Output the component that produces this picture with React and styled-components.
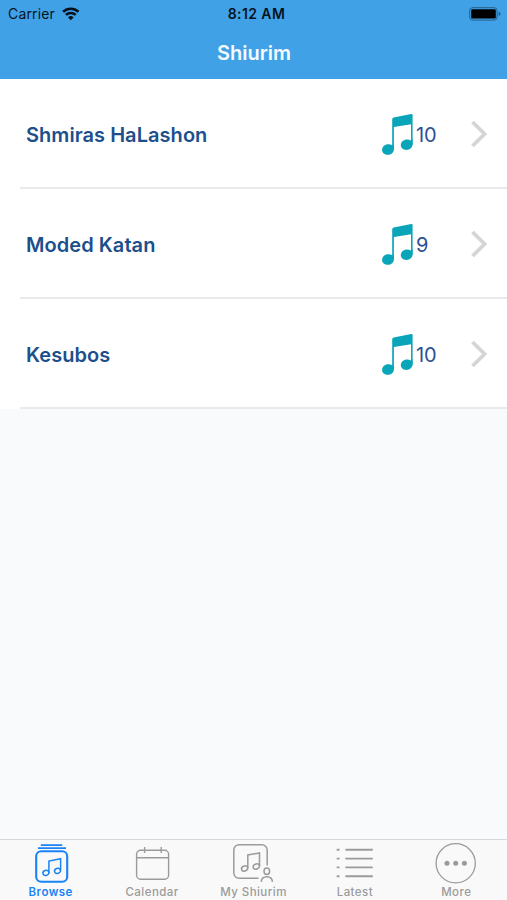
import React, { useState } from 'react'
import styled, { createGlobalStyle } from 'styled-components'

const GlobalStyle = createGlobalStyle`
  body {
    margin: 0;
    background: #f9fafc;
    font-family: Inter, 'Liberation Sans', sans-serif;
  }
`
const Screen = styled.div`
  display: flex;
  flex-direction: column;
  height: 900px;
  overflow: hidden;
  width: 507px;
`
const Header = styled.header`
  background: #40a1e7;
  flex: none;
  height: 79px;
`
const StatusBar = styled.div`
  align-items: center;
  box-sizing: border-box;
  color: #06131e;
  display: grid;
  grid-template-columns: 1fr auto 1fr;
  height: 27px;
  padding: 0 6px 0 8px;
`
const Carrier = styled.div`
  align-items: center;
  display: flex;
  font-size: 14px;
  gap: 7px;
  letter-spacing: 0.15px;
`
const Clock = styled.div`
  font-size: 14px;
  font-weight: 600;
  letter-spacing: 0.4px;
  padding-left: 4px;
`
const Battery = styled.svg`
  justify-self: end;
`
const Title = styled.h1`
  color: #f4faff;
  font-size: 20px;
  font-weight: 600;
  letter-spacing: 0;
  line-height: 24px;
  margin: 0;
  padding: 14px 0 0 1px;
  text-align: center;
`
const List = styled.ul`
  background: #ffffff;
  flex: none;
  list-style: none;
  margin: 0;
  padding: 0 0 0 20px;
`
const Row = styled.li`
  align-items: center;
  border-bottom: 2px solid #e9eaeb;
  box-sizing: border-box;
  display: flex;
  height: 110px;
  padding: 1px 20px 0 6px;
`
const Name = styled.span`
  color: #1c4f8c;
  flex: 1;
  font-size: 20px;
  font-weight: 600;
  letter-spacing: 0.05px;
  padding-top: 2px;
`
const Count = styled.span`
  color: #2d4f94;
  font-size: 20px;
  letter-spacing: -0.1px;
  padding: 2px 0 0 2px;
  width: 55px;
`
const Space = styled.main`
  flex: 1;
`
const TabBar = styled.nav`
  background: #f9f9f9;
  border-top: 1px solid #d5d7da;
  box-sizing: border-box;
  display: grid;
  flex: none;
  grid-template-columns: repeat(5, 1fr);
  height: 61px;
`
const Tab = styled.button`
  all: unset;
  align-items: center;
  color: ${({ $active }) => ($active ? '#1a84f5' : '#9b9b9b')};
  cursor: pointer;
  display: flex;
  flex-direction: column;
  font-size: 11.5px;
  font-weight: ${({ $active }) => ($active ? 600 : 500)};
  letter-spacing: 0.45px;
  line-height: 16px;
  white-space: nowrap;
`
const TabIcon = styled.svg`
  display: block;
  fill: none;
  height: 44px;
  stroke: currentColor;
  width: 48px;
`

const Wifi = () => (
  <svg width='18' height='14' viewBox='0 0 18 14' fill='none' stroke='#06131e' strokeWidth='2.6'>
    <path d='M1.1 4.8a11.2 11.2 0 0 1 15.4 0M3.9 7.9a7.2 7.2 0 0 1 9.8 0' />
    <path d='M8.8 13.2 6 10.4a4 4 0 0 1 5.6 0Z' fill='#06131e' stroke='none' />
  </svg>
)

const MusicNote = () => (
  <svg width='32' height='42' viewBox='0 0 32 42' fill='#0ba5b9'>
    <path d='M10.2 6.4Q10.2 5 11.6 4.6L29.2 1Q30.6.7 30.6 2.1V31.8H29V11.3L11.9 14V37H10.2Z' />
    <path d='M11.9 31V36.2C11.9 39.6 9.1 41.8 5.8 41.8C2.5 41.8.1 39.8.1 36.9C.1 33.7 3 31.3 6.3 31.3Q8.8 31.3 10.2 32.3Z' />
    <path d='M30.6 26V31.3C30.6 34.7 27.8 36.9 24.5 36.9C21.1 36.9 18.8 35 18.8 32C18.8 28.8 21.7 26.4 25 26.4Q27.5 26.4 29 27.4Z' />
  </svg>
)

const Chevron = () => (
  <svg width='16' height='28' viewBox='0 0 16 28' fill='none' stroke='#d5d5d5' strokeWidth='3.8'>
    <path d='M1.5 2 13.6 14 1.5 26' />
  </svg>
)

const BrowseIcon = () => (
  <TabIcon viewBox='0 0 48 44' strokeWidth='2.1'>
    <path d='M13.8 5.2H35.2M11 8.1H39' strokeWidth='1.8' />
    <rect x='9.2' y='11.3' width='31' height='30.5' rx='5' />
    <g strokeWidth='1.5'>
      <path d='M21.9 32.5V21L33.6 18.7V30.2' />
      <ellipse cx='18.9' cy='32.9' rx='3' ry='2.5' transform='rotate(-20 18.9 32.9)' />
      <ellipse cx='30.5' cy='30.9' rx='3' ry='2.5' transform='rotate(-20 30.5 30.9)' />
    </g>
  </TabIcon>
)

const CalendarIcon = () => (
  <TabIcon viewBox='0 0 48 44' strokeWidth='1.4'>
    <rect x='8.6' y='10.3' width='32' height='29' rx='4' />
    <path d='M8.6 17.7H40.6M16.6 7V13M33.2 7V13' />
  </TabIcon>
)

const MyShiurimIcon = () => (
  <TabIcon viewBox='0 0 48 44' strokeWidth='1.5'>
    <path d='M38.2 25.5V10a5.3 5.3 0 0 0-5.3-5.3H10.1A5.3 5.3 0 0 0 4.8 10V33a5.3 5.3 0 0 0 5.3 5.3H29.5' />
    <path d='M18.8 28V14.9L30.5 13V26' />
    <ellipse cx='15.6' cy='28.5' rx='3.2' ry='2.5' transform='rotate(-25 15.6 28.5)' />
    <ellipse cx='27.3' cy='26.5' rx='3.2' ry='2.5' transform='rotate(-25 27.3 26.5)' />
    <ellipse cx='37.8' cy='31.2' rx='2.8' ry='3.2' />
    <path d='M32.3 42C32.3 38.5 34 36.7 37.8 36.7S43.4 38.5 43.4 42' />
  </TabIcon>
)

const LatestIcon = () => (
  <TabIcon viewBox='0 0 48 44' strokeWidth='1.9'>
    {[9.8, 18.6, 27.4, 36.2].map((y) => (
      <path key={y} d={`M5.7 ${y}H8.5M14.4 ${y}H41.8`} />
    ))}
  </TabIcon>
)

const MoreIcon = () => (
  <TabIcon viewBox='0 0 48 44' strokeWidth='1.3'>
    <circle cx='23.7' cy='23.3' r='19.6' />
    <g fill='currentColor' stroke='none'>
      <circle cx='15' cy='23.3' r='2.5' />
      <circle cx='23.7' cy='23.3' r='2.5' />
      <circle cx='32.4' cy='23.3' r='2.5' />
    </g>
  </TabIcon>
)

const shiurim = [
  { name: 'Shmiras HaLashon', count: 10 },
  { name: 'Moded Katan', count: 9 },
  { name: 'Kesubos', count: 10 },
]

const tabs = [
  { label: 'Browse', Icon: BrowseIcon },
  { label: 'Calendar', Icon: CalendarIcon },
  { label: 'My Shiurim', Icon: MyShiurimIcon },
  { label: 'Latest', Icon: LatestIcon },
  { label: 'More', Icon: MoreIcon },
]

const App = () => {
  const [active, setActive] = useState('Browse')

  return (
    <Screen>
      <GlobalStyle />
      <Header>
        <StatusBar>
          <Carrier>
            Carrier
            <Wifi />
          </Carrier>
          <Clock>8:12 AM</Clock>
          <Battery width='32' height='14' viewBox='0 0 32 14'>
            <rect x='.7' y='.7' width='27.4' height='12.4' rx='3' fill='none' stroke='#255e87' />
            <rect x='2.2' y='2.2' width='24.6' height='9.4' rx='1.3' fill='#000' />
            <path d='M29.6 4.7Q31.6 5.3 31.6 6.9T29.6 9.1Z' fill='#255e87' />
          </Battery>
        </StatusBar>
        <Title>Shiurim</Title>
      </Header>
      <List>
        {shiurim.map(({ name, count }) => (
          <Row key={name}>
            <Name>{name}</Name>
            <MusicNote />
            <Count>{count}</Count>
            <Chevron />
          </Row>
        ))}
      </List>
      <Space />
      <TabBar>
        {tabs.map(({ label, Icon }) => (
          <Tab key={label} $active={label === active} onClick={() => setActive(label)}>
            <Icon />
            {label}
          </Tab>
        ))}
      </TabBar>
    </Screen>
  )
}

export default App
